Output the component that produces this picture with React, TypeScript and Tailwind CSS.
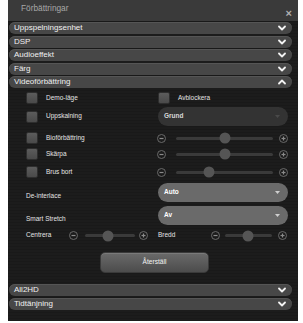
import React from "react";

const font = { fontFamily: '"Liberation Sans", Arial, sans-serif' };

function Chevron({ up = false }: { up?: boolean }) {
  return (
    <svg width="8" height="6" viewBox="0 0 8 6" className="shrink-0">
      <path
        d={up ? "M1 4.5 L4 1.5 L7 4.5" : "M1 1.5 L4 4.5 L7 1.5"}
        fill="none"
        stroke="#f2f2f2"
        strokeWidth="1.8"
        strokeLinecap="round"
        strokeLinejoin="round"
      />
    </svg>
  );
}

function SectionRow({ title, up = false }: { title: string; up?: boolean }) {
  return (
    <div className="ml-[1px] flex h-[12px] w-[283px] items-center justify-between rounded-full bg-[#474747] pl-[5px] pr-[6px] shadow-[inset_0_1px_0_#555]">
      <span className="text-[8px] leading-none text-[#f0f0f0]">{title}</span>
      <Chevron up={up} />
    </div>
  );
}

function Checkbox() {
  return (
    <div className="h-[12px] w-[12px] shrink-0 rounded-[2px] border border-[#2e2e2e] bg-[linear-gradient(#5c5c5c,#4a4a4a)]" />
  );
}

function RoundBtn({ plus = false }: { plus?: boolean }) {
  return (
    <svg width="9" height="9" viewBox="0 0 9 9" className="shrink-0">
      <circle cx="4.5" cy="4.5" r="4" fill="none" stroke="#6a6a6a" strokeWidth="1" />
      <path d="M2.5 4.5 H6.5" stroke="#8a8a8a" strokeWidth="1.2" />
      {plus && <path d="M4.5 2.5 V6.5" stroke="#8a8a8a" strokeWidth="1.2" />}
    </svg>
  );
}

function Slider({
  track,
  value,
  gapL = 10,
  gapR = 6,
}: {
  track: number;
  value: number;
  gapL?: number;
  gapR?: number;
}) {
  return (
    <div className="flex items-center">
      <RoundBtn />
      <div
        className="relative h-[3px] rounded-full bg-[#3a3a3a]"
        style={{ width: track, marginLeft: gapL, marginRight: gapR }}
      >
        <div
          className="absolute top-1/2 h-[11px] w-[11px] -translate-x-1/2 -translate-y-1/2 rounded-full bg-[#555555]"
          style={{ left: `${value}%` }}
        />
      </div>
      <RoundBtn plus />
    </div>
  );
}

function Select({ label, dark = false }: { label: string; dark?: boolean }) {
  return (
    <div
      className={`flex h-[19px] w-[130px] items-center justify-between rounded-full pl-[6px] pr-[8px] ${
        dark ? "bg-[#333333]" : "bg-[#6a6a6a]"
      }`}
    >
      <span className={`text-[6.5px] font-bold leading-none ${dark ? "text-[#d8d8d8]" : "text-white"}`}>{label}</span>
      <svg width="5" height="3" viewBox="0 0 5 3">
        <path d="M0 0 H5 L2.5 3 Z" fill={dark ? "#4a4a4a" : "#cfcfcf"} />
      </svg>
    </div>
  );
}

function Label({ children, className = "" }: { children: React.ReactNode; className?: string }) {
  return <span className={`text-[6.5px] leading-none text-[#e4e4e4] ${className}`}>{children}</span>;
}

export default function App() {
  return (
    <div className="h-[323px] w-[303px] bg-white" style={font}>
      <div className="ml-[8px] flex h-[321px] w-[290px] flex-col bg-[#1b1b1b] bg-[repeating-linear-gradient(0deg,#1c1c1c_0px,#1c1c1c_2px,#191919_2px,#191919_3px)]">
        {/* header */}
        <div className="flex h-[21px] shrink-0 items-center justify-between bg-[#3a3a3a] pl-[13px] pr-[6px]">
          <span className="mt-[-4px] text-[8.3px] leading-none text-[#a8a8a8]">Förbättringar</span>
          <span className="mt-[5px] text-[11px] font-bold leading-none text-[#b0b0b0]">×</span>
        </div>

        <div className="flex flex-col gap-[1.5px] pt-[1px]">
          <SectionRow title="Uppspelningsenhet" />
          <SectionRow title="DSP" />
          <SectionRow title="Audioeffekt" />
          <SectionRow title="Färg" />
          <SectionRow title="Videoförbättring" up />
        </div>

        {/* video enhancement content */}
        <div className="flex flex-col pl-[18px]">
          <div className="mt-[4px] flex h-[12px] items-center">
            <div className="flex w-[132px] items-center gap-[8px]">
              <Checkbox />
              <Label>Demo-läge</Label>
            </div>
            <div className="flex items-center gap-[8px]">
              <Checkbox />
              <Label>Avblockera</Label>
            </div>
          </div>

          <div className="mt-[3px] flex h-[19px] items-center">
            <div className="flex w-[132px] items-center gap-[8px]">
              <Checkbox />
              <Label>Uppskalning</Label>
            </div>
            <Select label="Grund" dark />
          </div>

          <div className="mt-[6px] flex h-[12px] items-center">
            <div className="flex w-[131px] items-center gap-[8px]">
              <Checkbox />
              <Label>Bioförbättring</Label>
            </div>
            <Slider track={97} value={50} />
          </div>

          <div className="mt-[4px] flex h-[12px] items-center">
            <div className="flex w-[131px] items-center gap-[8px]">
              <Checkbox />
              <Label>Skärpa</Label>
            </div>
            <Slider track={97} value={50} />
          </div>

          <div className="mt-[6px] flex h-[12px] items-center">
            <div className="flex w-[131px] items-center gap-[8px]">
              <Checkbox />
              <Label>Brus bort</Label>
            </div>
            <Slider track={97} value={34} />
          </div>

          <div className="mt-[5px] flex h-[19px] items-center">
            <div className="w-[132px]">
              <Label>De-interlace</Label>
            </div>
            <Select label="Auto" />
          </div>

          <div className="mt-[4px] flex h-[19px] items-center">
            <div className="w-[132px]">
              <Label>Smart Stretch</Label>
            </div>
            <Select label="Av" />
          </div>

          <div className="mt-[5px] flex h-[11px] items-center">
            <div className="flex w-[132px] items-center">
              <Label className="w-[43px]">Centrera</Label>
              <Slider track={50} value={46} gapL={7} gapR={4} />
            </div>
            <Label className="w-[53px]">Bredd</Label>
            <Slider track={47} value={49} gapL={5} gapR={6} />
          </div>
        </div>

        <div className="mt-[11px] ml-[92px] flex h-[21px] w-[109px] items-center justify-center rounded-[5px] border border-[#3a3a3a] bg-[linear-gradient(#6a6a6a,#4c4c4c)] shadow-[inset_0_1px_0_#7a7a7a]">
          <span className="text-[6.6px] leading-none text-[#f4f4f4]">Återställ</span>
        </div>

        <div className="mt-[11px] flex flex-col gap-[2px]">
          <SectionRow title="All2HD" />
          <SectionRow title="Tidtänjning" />
        </div>
      </div>
    </div>
  );
}
